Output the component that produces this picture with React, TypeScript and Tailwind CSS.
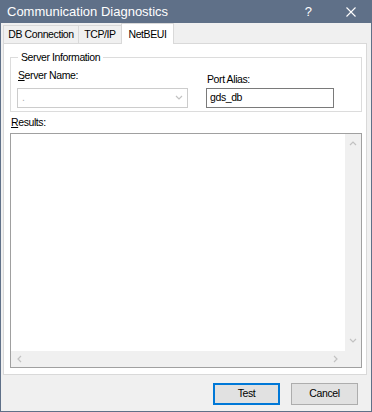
const tabBorder = 'border-[#d9d9d9]';

function Chevron({ dir }: { dir: 'up' | 'down' | 'left' | 'right' }) {
  const paths: Record<string, string> = {
    up: 'M1 5 L4 2 L7 5',
    down: 'M1 2 L4 5 L7 2',
    left: 'M5 1 L2 4 L5 7',
    right: 'M2 1 L5 4 L2 7',
  };
  return (
    <svg width="8" height="8" viewBox="0 0 8 8" className="block">
      <path d={paths[dir]} fill="none" stroke="#c2c2c2" strokeWidth="1.2" />
    </svg>
  );
}

export default function App() {
  return (
    <div className="w-[372px] h-[412px] bg-[#5f7088] flex flex-col font-['Liberation_Sans',Arial,sans-serif] text-[10.5px] tracking-[-0.4px] text-black">
      {/* title bar */}
      <div className="h-[23px] flex items-center text-white shrink-0">
        <span className="pl-[7px] text-[13px] tracking-normal">Communication Diagnostics</span>
        <span className="ml-auto text-[13px] tracking-normal">?</span>
        <svg width="10" height="10" viewBox="0 0 10 10" className="ml-[34px] mr-[16px]">
          <path d="M0.5 0.5 L9.5 9.5 M9.5 0.5 L0.5 9.5" stroke="#ffffff" strokeWidth="1.1" />
        </svg>
      </div>

      <div className="flex-1 mx-px mb-px bg-[#f0f0f0] flex flex-col">
        {/* tabs */}
        <div className="h-[20px] flex items-end pl-[2px] shrink-0">
          <div className={`w-[76px] h-[18px] border border-b-0 ${tabBorder} flex items-center justify-center`}>
            DB Connection
          </div>
          <div className={`w-[43px] h-[18px] border-t border-r ${tabBorder} flex items-center justify-center`}>
            TCP/IP
          </div>
          <div className={`-ml-px w-[53px] h-[21px] -mb-px relative z-10 bg-white border border-b-0 ${tabBorder} flex justify-center pt-[3px]`}>
            NetBEUI
          </div>
        </div>

        {/* tab page */}
        <div className={`ml-[2px] mr-[4px] h-[332px] bg-white border ${tabBorder} pl-[6px] pr-[4px] pb-[6px] flex flex-col shrink-0`}>
          <fieldset className="mt-[7px] border border-[#dcdcdc]">
            <legend className="ml-[7px] px-[3px] leading-[13px]">Server Information</legend>
            <div className="flex items-end pl-[6px] pb-[3px]">
              <div className="flex flex-col">
                <label className="mt-[5px] mb-[6px] pl-px leading-[13px]">
                  <span className="underline">S</span>erver Name:
                </label>
                <div className="w-[171px] h-[20px] border border-[#cccccc] bg-white flex items-center pl-[4px] pr-[4px]">
                  <span className="text-[#b0b0b0]">.</span>
                  <span className="ml-auto">
                    <Chevron dir="down" />
                  </span>
                </div>
              </div>
              <div className="flex flex-col ml-[18px]">
                <label className="mb-[2px] pl-px leading-[13px]">Port Alias:</label>
                <div className="w-[128px] h-[20px] border border-[#7a7a7a] bg-white flex items-center pl-[3px]">
                  gds_db
                </div>
              </div>
            </div>
          </fieldset>

          <label className="mt-[4px] pl-px leading-[13px]">
            <span className="underline">R</span>esults:
          </label>

          <div className="mt-[4px] flex-1 w-[352px] border border-[#a0a0a0] flex flex-col">
            <div className="flex-1 flex">
              <div className="flex-1 bg-white" />
              <div className="w-[16px] bg-[#f0f0f0] flex flex-col items-center justify-between py-[6px]">
                <Chevron dir="up" />
                <Chevron dir="down" />
              </div>
            </div>
            <div className="h-[16px] flex">
              <div className="flex-1 bg-[#f0f0f0] flex items-center justify-between px-[5px]">
                <Chevron dir="left" />
                <Chevron dir="right" />
              </div>
              <div className="w-[16px] bg-[#f0f0f0]" />
            </div>
          </div>
        </div>

        {/* buttons */}
        <div className="flex-1 flex justify-end items-start pt-[8px] pr-[13px] gap-[11px]">
          <button className="w-[67px] h-[22px] bg-[#e1e1e1] border-2 border-[#0078d7] flex items-center justify-center">
            Test
          </button>
          <button className="w-[67px] h-[22px] bg-[#e1e1e1] border border-[#adadad] flex items-center justify-center">
            Cancel
          </button>
        </div>
      </div>
    </div>
  );
}
